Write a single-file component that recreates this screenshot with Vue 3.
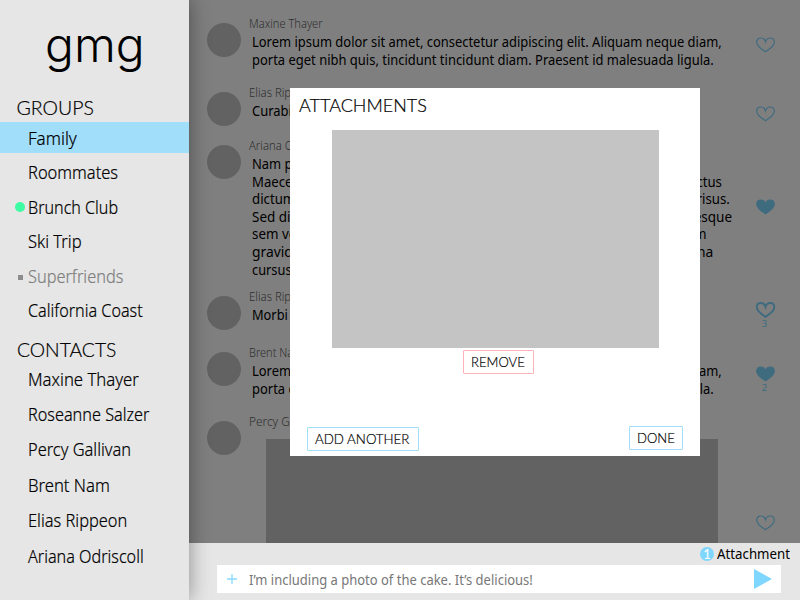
<script setup>
const groups = [
  { name: 'Family', state: 'active', w: 49 },
  { name: 'Roommates', w: 90.5 },
  { name: 'Brunch Club', state: 'online', w: 90 },
  { name: 'Ski Trip', w: 54 },
  { name: 'Superfriends', state: 'muted', w: 95 },
  { name: 'California Coast', w: 115 }
]
const contacts = [
  { name: 'Maxine Thayer', w: 111 },
  { name: 'Roseanne Salzer', w: 121 },
  { name: 'Percy Gallivan', w: 103.5 },
  { name: 'Brent Nam', w: 81.5 },
  { name: 'Elias Rippeon', w: 99 },
  { name: 'Ariana Odriscoll', w: 116 }
]
const messages = [
  {
    from: 'Maxine Thayer', w: 74, height: 69, heart: 'outline', likeTop: 14,
    lines: [
      { text: 'Lorem ipsum dolor sit amet, consectetur adipiscing elit. Aliquam neque diam,', w: 469.5 },
      { text: 'porta eget nibh quis, tincidunt tincidunt diam. Praesent id malesuada ligula.', w: 461.5 }
    ]
  },
  { from: 'Elias Rippeon', w: 69, height: 53, heart: 'outline', likeTop: 14, lines: [{ text: 'Curabitur vitae mauris at velit.', w: 184 }] },
  {
    from: 'Ariana Odriscoll', w: 81, height: 151, heart: 'filled', likeTop: 54,
    lines: [
      { text: 'Nam porta lorem sed diam pharetra, vel tempus justo.', w: 330 },
      { text: 'Maecenas vitae turpis sed lacus porta finibus. Integer non augue quis luctus', w: 470 },
      { text: 'dictum. Aliquam erat volutpat. Donec sit amet sapien vel arcu gravida a risus.', w: 478 },
      { text: 'Sed dignissim, nunc vel porta tincidunt, mauris lectus ornare a pellentesque', w: 480 },
      { text: 'sem vel pulvinar. Vivamus vitae mi at neque dapibus feugiat non ut diam', w: 455 },
      { text: 'gravida, et faucibus nisl efficitur. Praesent sed justo vel sapien nec urna', w: 461 },
      { text: 'cursus.', w: 43 }
    ]
  },
  { from: 'Elias Rippeon', w: 69, height: 56, heart: 'bold', likes: 3, likeTop: 6, lines: [{ text: 'Morbi sed diam et neque porta.', w: 190 }] },
  {
    from: 'Brent Nam', w: 54, height: 69, heart: 'filled', likes: 2, likeTop: 14,
    lines: [
      { text: 'Lorem ipsum dolor sit amet, consectetur adipiscing elit. Aliquam neque diam,', w: 469.5 },
      { text: 'porta eget nibh quis, tincidunt tincidunt diam. Praesent id malesuada ligula.', w: 461.5 }
    ]
  },
  { from: 'Percy Gallivan', w: 74, height: 130, heart: 'outline', likeTop: 94, photo: true, lines: [] }
]

// Condenses a label horizontally until it spans the given width.
const vFit = (el, { value }) => {
  el.style.transform = 'none'
  el.style.transform = `scaleX(${value / el.offsetWidth})`
}
</script>

<template>
  <div class="app">
    <aside class="sidebar">
      <div class="logo"><span v-fit="100" class="fit">gmg</span></div>
      <h2><span v-fit="77" class="fit">GROUPS</span></h2>
      <ul class="groups">
        <li v-for="g in groups" :key="g.name" :class="g.state">
          <span v-fit="g.w" class="fit">{{ g.name }}</span>
        </li>
      </ul>
      <h2 class="second"><span v-fit="99" class="fit">CONTACTS</span></h2>
      <ul class="contacts">
        <li v-for="c in contacts" :key="c.name"><span v-fit="c.w" class="fit">{{ c.name }}</span></li>
      </ul>
    </aside>

    <main>
      <section class="feed">
        <article v-for="(m, i) in messages" :key="i" :style="{ height: m.height + 'px' }">
          <div class="avatar"></div>
          <div class="body">
            <div class="from"><span v-fit="m.w" class="fit">{{ m.from }}</span></div>
            <p v-for="(l, j) in m.lines" :key="j"><span v-fit="l.w" class="fit">{{ l.text }}</span></p>
            <div v-if="m.photo" class="photo"></div>
          </div>
          <div class="like" :style="{ paddingTop: m.likeTop + 'px' }">
            <svg :class="m.heart" width="20" height="16" viewBox="0 0 20 16">
              <path d="M9.5 14.8C6.5 12.8 .7 9.3 .7 5.2C.7 2.5 2.6 1 4.8 1C7.1 1 8.8 2.3 9.5 4.8C10.2 2.3 11.9 1 14.2 1C16.4 1 18.3 2.5 18.3 5.2C18.3 9.3 12.5 12.8 9.5 14.8Z" />
            </svg>
            <span v-if="m.likes">{{ m.likes }}</span>
          </div>
        </article>
        <div class="shade"></div>
        <div class="modal" role="dialog">
          <h3><span v-fit="128" class="fit">ATTACHMENTS</span></h3>
          <div class="preview"></div>
          <button class="remove"><span v-fit="54" class="fit">REMOVE</span></button>
          <div class="actions">
            <button class="add"><span v-fit="94" class="fit">ADD ANOTHER</span></button>
            <button class="done"><span v-fit="37.5" class="fit">DONE</span></button>
          </div>
        </div>
      </section>

      <footer>
        <div class="attached"><b>1</b><span v-fit="73" class="fit">Attachment</span></div>
        <div class="composer">
          <svg width="10" height="10" viewBox="0 0 10 10"><path d="M5 0V10M0 5H10" stroke="#87d9ff" stroke-width="1.3" /></svg>
          <div class="draft"><span v-fit="283.5" class="fit">I’m including a photo of the cake. It’s delicious!</span></div>
          <svg width="18" height="20" viewBox="0 0 18 20"><path d="M0 0L18 10L0 20Z" fill="#7fd6ff" /></svg>
        </div>
      </footer>
    </main>
  </div>
</template>

<style>
body { margin: 0; }
</style>

<style scoped>
* { box-sizing: border-box; }
.app { display: flex; width: 800px; height: 600px; overflow: hidden; font-family: "Noto Sans", "Open Sans", sans-serif; color: #000; }
.fit { display: inline-block; white-space: nowrap; transform-origin: left center; }
ul { list-style: none; margin: 0; padding: 0; }
h2, h3, p { margin: 0; font-weight: 300; }
.sidebar { position: relative; z-index: 3; flex: none; width: 189px; height: 600px; background: #e6e6e6; box-shadow: 0 0 20px rgba(0, 0, 0, .4); }
.logo { height: 95px; padding: 14px 0 0 45px; font: 300 47px/62px Inter, sans-serif; }
h2 { height: 27px; padding-left: 16.5px; font: 300 19.5px/26px Lato, sans-serif; -webkit-text-stroke: .2px #000; }
.groups { display: flex; flex-direction: column; gap: 3.4px; }
.groups li, .contacts li { position: relative; padding-left: 28px; font-size: 18.4px; font-weight: 300; line-height: 32px; height: 31px; -webkit-text-stroke: .2px currentColor; }
.contacts li { line-height: 31px; }
.active { background: #a0defa; }
.groups .muted { color: #7f7f7f; }
.online::before { content: ""; position: absolute; left: 15px; top: 11px; width: 10px; height: 10px; border-radius: 50%; background: #3dfca4; }
.muted::before { content: ""; position: absolute; left: 18px; top: 15px; width: 5px; height: 5px; background: #8c8c8c; }
.second { margin-top: 12px; height: 25.85px; }
.contacts { display: flex; flex-direction: column; gap: 4.35px; }
main { width: 611px; display: flex; flex-direction: column; }
.feed { position: relative; height: 543px; overflow: hidden; padding-top: 23px; background: #fff; }
article { display: flex; padding-left: 18px; }
.avatar { width: 34px; height: 34px; border-radius: 50%; background: #c4c4c4; flex: none; }
.body { width: 505px; padding-left: 8px; margin-top: -8px; flex: none; }
.from { height: 18px; line-height: 17px; font-size: 12px; font-weight: 300; color: #606060; }
p { height: 17.6px; padding-left: 3px; font-size: 14.3px; line-height: 18px; font-weight: 400; }
.photo { width: 452px; height: 112px; margin-left: 17px; margin-top: 8px; background: #c4c4c4; }
.like { width: 39px; display: flex; flex-direction: column; align-items: center; color: #7fd6ff; font-size: 9.5px; line-height: 11px; }
.like span { margin-right: 2px; }
.like svg { flex: none; fill: none; stroke: #7fd6ff; stroke-width: 1.2; }
.like .bold { stroke-width: 2; }
.like .filled { fill: #7fd6ff; }
.shade { position: absolute; inset: 0; background: rgba(0, 0, 0, .5); }
.modal { position: absolute; left: 101px; top: 88px; width: 410px; height: 368px; background: #fff; display: flex; flex-direction: column; }
h3 { height: 42px; padding: 5px 0 0 9px; font: 300 18px/25px Lato, sans-serif; -webkit-text-stroke: .2px #000; }
.preview { width: 327px; height: 218px; margin-left: 42px; background: #c4c4c4; }
button { height: 24px; border: 1px solid #a0defa; background: #fff; padding: 0 0 0 7px; font: 300 14.3px/22px Lato, sans-serif; -webkit-text-stroke: .2px #000; color: #000; text-align: left; border-radius: 1px; overflow: hidden; }
.remove { width: 71px; margin: 2px 0 0 173px; border-color: #ffb3ba; }
.actions { display: flex; justify-content: space-between; padding: 0 17px; margin-top: 52px; }
.add { width: 112px; margin-top: 1px; }
.done { width: 54px; }
footer { height: 57px; background: #e6e6e6; }
.attached { display: flex; height: 22px; padding-left: 511px; font-size: 14px; line-height: 22px; }
.attached b { flex: none; width: 14px; height: 14px; margin: 4px 3px 0 0; border-radius: 50%; background: #7fd6ff; color: #fff; font: 400 13px/14px Lato, sans-serif; text-align: center; }
.composer { display: flex; align-items: center; width: 564px; height: 28px; margin-left: 28px; padding-left: 10px; background: #fff; }
.draft { width: 517px; padding-left: 12px; font-size: 14.3px; color: #777; }
</style>
